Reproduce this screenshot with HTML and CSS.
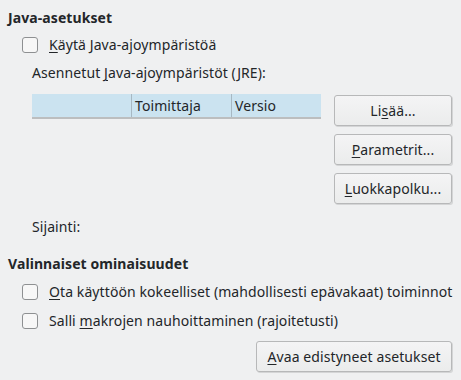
FILE: index.html
```html
<!DOCTYPE html>
<html lang="fi">
<head>
<meta charset="utf-8">
<link rel="stylesheet" href="styles.css">
</head>
<body>
<div class="page">
  <div class="heading">Java-asetukset</div>
  <label class="check first"><span class="box"></span><span><u>K</u>äytä Java-ajoympäristöä</span></label>
  <div class="indent">
    <div class="label installed">Asennetut <u>J</u>ava-ajoympäristöt (JRE):</div>
    <div class="jre">
      <div class="table">
        <div class="col c1"></div>
        <div class="col c2">Toimittaja</div>
        <div class="col c3">Versio</div>
      </div>
      <div class="buttons">
        <button class="btn">Li<u>s</u>ää...</button>
        <button class="btn"><u>P</u>arametrit...</button>
        <button class="btn"><u>L</u>uokkapolku...</button>
      </div>
    </div>
    <div class="label location">Sijainti:</div>
  </div>
  <div class="heading second">Valinnaiset ominaisuudet</div>
  <label class="check opt1"><span class="box"></span><span><u>O</u>ta käyttöön kokeelliset (mahdollisesti epävakaat) toiminnot</span></label>
  <label class="check opt2"><span class="box"></span><span>Salli <u>m</u>akrojen nauhoittaminen (rajoitetusti)</span></label>
  <div class="bottom"><button class="btn wide"><u>A</u>vaa edistyneet asetukset</button></div>
</div>
</body>
</html>
```

FILE: styles.css
```css
html, body {
  margin: 0;
  padding: 0;
  background: #eff0f1;
}
body {
  font-family: "Noto Sans", "DejaVu Sans", sans-serif;
  font-size: 14px;
  letter-spacing: 0.09px;
  color: #232629;
}
u {
  text-decoration: underline;
  text-underline-offset: 2px;
  text-decoration-thickness: 1px;
}
.page {
  width: 461px;
  height: 380px;
  box-sizing: border-box;
  padding: 9px 9px 0 8px;
  display: flex;
  flex-direction: column;
}
.heading {
  font-weight: bold;
  height: 18px;
  line-height: 18px;
}
.check {
  display: flex;
  align-items: center;
  height: 18px;
  line-height: 18px;
  margin-left: 14px;
  gap: 11px;
  white-space: nowrap;
}
.box {
  width: 14px;
  height: 14px;
  border: 1px solid #8e9092;
  border-radius: 3px;
  background: #f7f7f7;
  flex: none;
}
.first { margin-top: 9px; }
.indent {
  margin-left: 24px;
  display: flex;
  flex-direction: column;
}
.label {
  height: 18px;
  line-height: 18px;
}
.installed { margin-top: 10px; }
.jre {
  display: flex;
  margin-top: 12px;
  gap: 13px;
  align-items: flex-start;
}
.table {
  width: 289px;
  height: 23px;
  display: flex;
  background: #cbe3f0;
  box-shadow: 0 2px 0 #bcbebf;
}
.col {
  line-height: 23px;
  padding-left: 3px;
  box-sizing: border-box;
}
.c1 { width: 99px; }
.c2 { width: 100px; border-left: 1px solid #a7b8c3; }
.c3 { flex: 1; border-left: 1px solid #a7b8c3; }
.buttons {
  display: flex;
  flex-direction: column;
  gap: 8px;
  margin-top: 1px;
}
.btn {
  font: inherit;
  letter-spacing: inherit;
  color: #232629;
  width: 118px;
  height: 31px;
  box-sizing: border-box;
  border: 1px solid #b7b8b9;
  border-radius: 3px;
  background: linear-gradient(#f4f4f5, #ebecec);
  box-shadow: 1px 1px 0 #d4d5d6;
  padding: 0;
}
.location { margin-top: 14px; }
.second { margin-top: 19px; }
.opt1 { margin-top: 10px; }
.opt2 { margin-top: 11px; }
.bottom {
  display: flex;
  justify-content: flex-end;
  margin-top: 11px;
}
.wide { width: 196px; }
```
